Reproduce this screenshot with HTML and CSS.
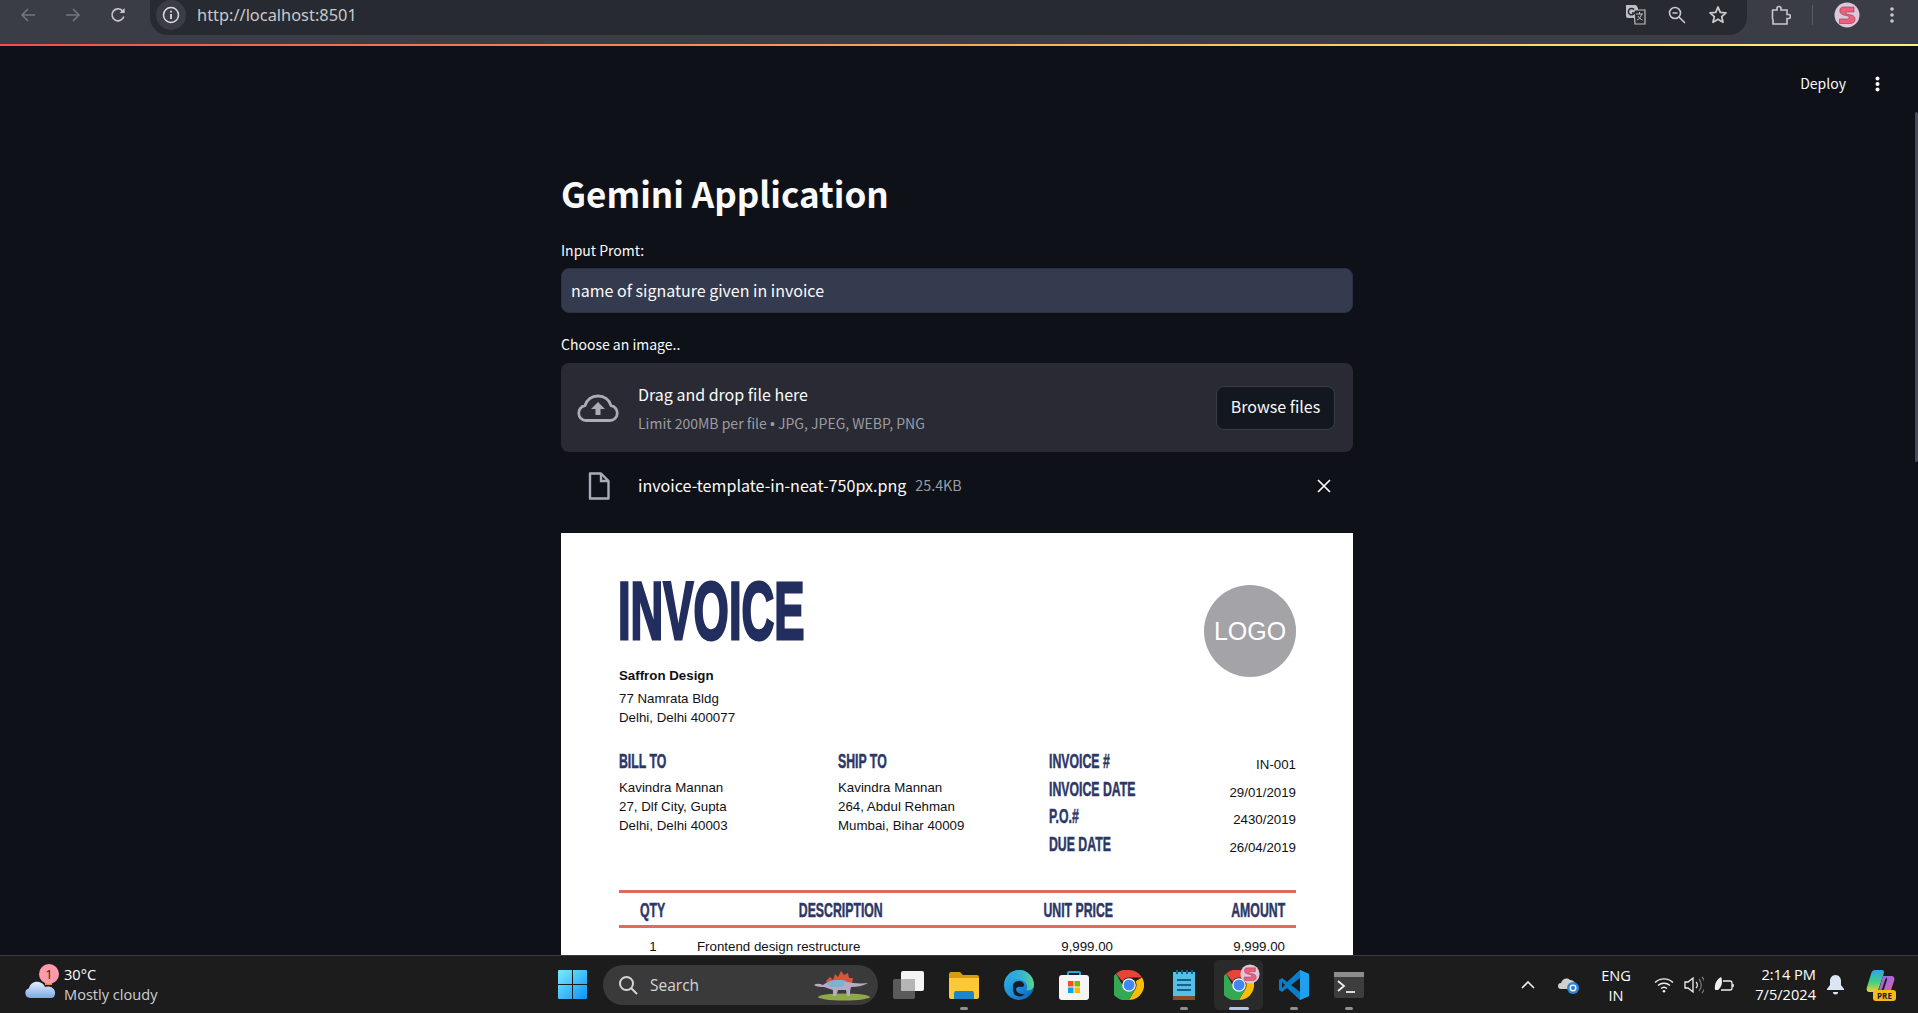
FILE: index.html

```html
<!DOCTYPE html>
<html>
<head>
  <meta charset="UTF-8">
  <title>Gemini Application</title>
  <link rel="stylesheet" href="styles.css">
</head>
<body>
  <svg class="defs" width="0" height="0">
    <symbol id="chrome" viewBox="0 0 30 30">
      <path d="M15 0a15 15 0 0 1 13 7.500H15a7.500 7.500 0 0 0-6.500 3.750L2 3.800A15 15 0 0 1 15 0z" fill="#ea4335"/>
      <path d="M28 7.500A15 15 0 0 1 15 30l6.500-11.250A7.500 7.500 0 0 0 21.500 11.250z" fill="#fbbc04"/>
      <path d="M15 30A15 15 0 0 1 2 3.800l6.500 11.200a7.500 7.500 0 0 0 13 3.750L15 30z" fill="#34a853"/>
      <circle cx="15" cy="15" r="6.800" fill="#fff"/>
      <circle cx="15" cy="15" r="5.500" fill="#4285f4"/>
    </symbol>
    <symbol id="avatar" viewBox="0 0 26 26">
      <circle cx="13" cy="13" r="12.500" fill="#dcc8dc"/>
      <path d="M20 5H9.500C6 5 5.500 8 6 10c.5 2 3 3 6 3.500 2.500.5 3 1 3 2 0 1.200-1 1.500-2 1.500H5.500v4.500H16c4 0 5.500-2.500 5-5-.4-2.500-2.500-3.500-6-4-2.500-.4-3-.8-3-1.500 0-.8.8-1 1.500-1H20z" fill="#ef5f78" stroke="#8c3a50" stroke-width=".6"/>
    </symbol>
  </svg>

  <header class="browser">
    <div class="nav">
      <svg class="nav-icon" width="16" height="16" viewBox="0 0 16 16"><path d="M15 8H2M8 2 2 8l6 6" fill="none" stroke="#73767c" stroke-width="1.600"/></svg>
      <svg class="nav-icon" width="16" height="16" viewBox="0 0 16 16"><path d="M1 8h13M8 2l6 6-6 6" fill="none" stroke="#73767c" stroke-width="1.600"/></svg>
      <svg class="nav-icon" width="16" height="16" viewBox="0 0 16 16"><path d="M13.800 9.500A6 6 0 1 1 12.300 3.600L14 5.200" fill="none" stroke="#c7c9cc" stroke-width="1.600"/><path d="M14.600 1v5h-5z" fill="#c7c9cc"/></svg>
    </div>
    <div class="omnibox">
      <span class="site-info">
        <svg width="18" height="18" viewBox="0 0 18 18"><circle cx="9" cy="9" r="7.500" fill="none" stroke="#dcdde0" stroke-width="1.500"/><path d="M8.100 8h1.800v5H8.100zM8.100 4.800h1.800v1.800H8.100z" fill="#dcdde0"/></svg>
      </span>
      <span class="url">http://localhost:8501</span>
      <span class="omni-icons">
        <svg width="21" height="21" viewBox="0 0 21 21"><path d="M1 1h10l2 3v10H3a2 2 0 0 1-2-2z" fill="#bdbfc2"/><path d="M9 6h11v14H10z" fill="#2a2c33" stroke="#bdbfc2" stroke-width="1.200"/><path d="M11 10h7M14.500 8v2M12 16c2.500-1.200 4-3 4.500-6M13 12c1 2 2.500 3 4.500 4" fill="none" stroke="#bdbfc2"/><path d="M9 5.500A3.200 3.200 0 1 0 9.500 9H7" fill="none" stroke="#2a2c33" stroke-width="1.500"/></svg>
        <svg width="18" height="18" viewBox="0 0 18 18"><circle cx="7" cy="7" r="5.500" fill="none" stroke="#c7c9cc" stroke-width="1.600"/><path d="M4.500 7h5M11 11l6 6" fill="none" stroke="#c7c9cc" stroke-width="1.600"/></svg>
        <svg width="20" height="20" viewBox="0 0 20 20"><path d="M10 2l2.300 5.300 5.700.5-4.300 3.800 1.300 5.600L10 14.200l-5 3 1.300-5.600L2 7.800l5.700-.5z" fill="none" stroke="#c7c9cc" stroke-width="1.800" stroke-linejoin="round"/></svg>
      </span>
    </div>
    <div class="browser-actions">
      <svg width="20" height="20" viewBox="0 0 20 20"><path d="M1 5h5V3.500a2 2 0 0 1 4 0V5h6v4.500h1.500a2 2 0 0 1 0 4H16V19H2v-5" fill="none" stroke="#c7c9cc" stroke-width="1.600"/><path d="M1.500 5v9" stroke="#c7c9cc" stroke-width="1.600"/></svg>
      <span class="action-sep"></span>
      <svg width="26" height="26"><use href="#avatar"/></svg>
      <svg class="kebab" width="4" height="16" viewBox="0 0 4 16"><circle cx="2" cy="2" r="1.800" fill="#c7c9cc"/><circle cx="2" cy="8" r="1.800" fill="#c7c9cc"/><circle cx="2" cy="14" r="1.800" fill="#c7c9cc"/></svg>
    </div>
  </header>
  <div class="rainbow"></div>

  <main class="app">
    <div class="app-toolbar">
      <span class="deploy">Deploy</span>
      <svg width="5" height="16" viewBox="0 0 5 16"><circle cx="2.500" cy="2.500" r="2" fill="#fafafa"/><circle cx="2.500" cy="8" r="2" fill="#fafafa"/><circle cx="2.500" cy="13.500" r="2" fill="#fafafa"/></svg>
    </div>

    <section class="block">
      <h1>Gemini Application</h1>

      <label class="field-label">Input Promt:</label>
      <div class="text-input">name of signature given in invoice</div>

      <label class="field-label second">Choose an image..</label>
      <div class="dropzone">
        <svg class="cloud" width="42" height="28" viewBox="0 0 42 28"><path d="M9 26.500a7.500 7.500 0 0 1-1-14.900C9.500 6 14.500 2 21 2c6.500 0 11.500 4 13 9.600a7.500 7.500 0 0 1-1 14.900z" fill="none" stroke="#a9adb8" stroke-width="2.800" stroke-linejoin="round"/><path d="M21 8l7 7h-4.500v6h-5v-6H14z" fill="#a9adb8"/></svg>
        <div class="drop-text">
          <div class="drop-title">Drag and drop file here</div>
          <div class="drop-limit">Limit 200MB per file <span class="dot">•</span> JPG, JPEG, WEBP, PNG</div>
        </div>
        <button class="browse">Browse files</button>
      </div>

      <div class="file-row">
        <svg class="file-icon" width="22" height="28" viewBox="0 0 22 28"><path d="M2 1.500h11l7.500 7.500v17.500H2z" fill="none" stroke="#a9adb8" stroke-width="2.400" stroke-linejoin="round"/><path d="M13 1.500V9h7.500" fill="none" stroke="#a9adb8" stroke-width="2.400"/></svg>
        <span class="file-name">invoice-template-in-neat-750px.png</span>
        <span class="file-size">25.4KB</span>
        <svg class="file-remove" width="14" height="14" viewBox="0 0 14 14"><path d="M1 1l12 12M13 1 1 13" stroke="#fafafa" stroke-width="1.700"/></svg>
      </div>

      <div class="invoice">
        <div class="inv-top">
          <div>
            <div class="inv-title"><span>INVOICE</span></div>
            <div class="inv-company">Saffron Design</div>
            <div class="inv-text">77 Namrata Bldg<br>Delhi, Delhi 400077</div>
          </div>
          <div class="inv-logo">LOGO</div>
        </div>

        <div class="inv-parties">
          <div>
            <div class="inv-head"><span>BILL TO</span></div>
            <div class="inv-text">Kavindra Mannan<br>27, Dlf City, Gupta<br>Delhi, Delhi 40003</div>
          </div>
          <div>
            <div class="inv-head"><span>SHIP TO</span></div>
            <div class="inv-text">Kavindra Mannan<br>264, Abdul Rehman<br>Mumbai, Bihar 40009</div>
          </div>
          <div class="inv-meta">
            <div class="meta-row"><div class="inv-head"><span>INVOICE #</span></div><b>IN-001</b></div>
            <div class="meta-row"><div class="inv-head"><span>INVOICE DATE</span></div><b>29/01/2019</b></div>
            <div class="meta-row"><div class="inv-head"><span>P.O.#</span></div><b>2430/2019</b></div>
            <div class="meta-row"><div class="inv-head"><span>DUE DATE</span></div><b>26/04/2019</b></div>
          </div>
        </div>

        <div class="inv-table-head">
          <div class="inv-head center"><span>QTY</span></div>
          <div class="inv-head center"><span>DESCRIPTION</span></div>
          <div class="inv-head right"><span>UNIT PRICE</span></div>
          <div class="inv-head right"><span>AMOUNT</span></div>
        </div>
        <div class="inv-row">
          <div class="center">1</div>
          <div class="desc">Frontend design restructure</div>
          <div class="right">9,999.00</div>
          <div class="right">9,999.00</div>
        </div>
      </div>
    </section>
    <div class="scroll-thumb"></div>
  </main>

  <footer class="taskbar">
    <div class="weather">
      <span class="weather-icon">
        <svg width="32" height="24" viewBox="0 0 32 24"><defs><linearGradient id="cl" x1="0" y1="0" x2="0" y2="1"><stop offset="0" stop-color="#e3effd"/><stop offset="1" stop-color="#7fa8e6"/></linearGradient></defs><rect x="20" y="2" width="7" height="8" fill="#f08a1d"/><path d="M5 23a5 5 0 0 1-1-9.800C5 9 9 6 14 7c3 .5 5 2.500 6 5 2-1 9-1 10 5 .5 3-1 6-4 6z" fill="url(#cl)"/></svg>
        <span class="weather-badge">1</span>
      </span>
      <div class="weather-text">
        <div>30°C</div>
        <div class="weather-desc">Mostly cloudy</div>
      </div>
    </div>

    <div class="task-center">
      <svg class="task-start" width="29" height="29" viewBox="0 0 29 29"><defs><linearGradient id="win" x1="0" y1="0" x2="1" y2="1"><stop offset="0" stop-color="#7deaff"/><stop offset="1" stop-color="#0a94f5"/></linearGradient></defs><path d="M0 1a1 1 0 0 1 1-1h13v14H0zM15 0h13a1 1 0 0 1 1 1v13H15zM0 15h14v14H1a1 1 0 0 1-1-1zM15 15h14v13a1 1 0 0 1-1 1H15z" fill="url(#win)"/></svg>

      <div class="task-search">
        <svg width="20" height="20" viewBox="0 0 20 20"><circle cx="8.500" cy="8.500" r="6.500" fill="none" stroke="#d5d5d5" stroke-width="2"/><path d="M13 13l6 6" stroke="#d5d5d5" stroke-width="2"/></svg>
        <span>Search</span>
        <svg class="dino" width="56" height="32" viewBox="0 0 56 32"><ellipse cx="30" cy="28" rx="26" ry="3.500" fill="#8fa848"/><path d="M12 12l4-4 3 3 2-6 3 3 3-6 3 4 4-2 1 5 4 0-1 5H14z" fill="#d9553a"/><path d="M0 16c3-2 6-1 9 0 5-4 16-7 24-3 5 1 13 2 21 1-5 3-12 4-17 4-1 3-1 6-1 9h-3l-1-6-8 0-2 6h-3l0-6c-3-1-6-2-9-3-3 0-7 0-10-2z" fill="#b9a9c4"/><path d="M12 14c6-3 14-4 20-2l-3 6-12 0z" fill="#7fb2d0"/></svg>
      </div>

      <div class="task-icons">
        <div class="task-item">
          <svg width="31" height="28" viewBox="0 0 31 28"><rect x="0" y="8" width="22" height="20" rx="2" fill="#5b5b5b"/><rect x="8" y="0" width="23" height="20" rx="2" fill="#f4f4f4"/><rect x="8" y="8" width="14" height="12" fill="#b5b5b5"/></svg>
        </div>
        <div class="task-item open">
          <svg width="30" height="28" viewBox="0 0 30 28"><path d="M0 3a2 2 0 0 1 2-2h9l3 3h14a2 2 0 0 1 2 2v4H0z" fill="#d99a14"/><path d="M0 7h30v19a2 2 0 0 1-2 2H2a2 2 0 0 1-2-2z" fill="#fdc934"/><path d="M5 22a2 2 0 0 1 2-2h16a2 2 0 0 1 2 2v6H5z" fill="#1a86d0"/></svg>
        </div>
        <div class="task-item">
          <svg width="30" height="30" viewBox="0 0 30 30"><defs><linearGradient id="edge" x1="0" y1="0" x2="1" y2="1"><stop offset="0" stop-color="#33bfe0"/><stop offset=".6" stop-color="#1a86d8"/><stop offset="1" stop-color="#0d5aa8"/></linearGradient><linearGradient id="edge2" x1="0" y1="0" x2="1" y2="0"><stop offset="0" stop-color="#2a9fe0"/><stop offset=".6" stop-color="#36b8d0"/><stop offset="1" stop-color="#5ad688"/></linearGradient></defs><circle cx="15" cy="15" r="15" fill="url(#edge)"/><path d="M15 0a15 15 0 0 1 15 15c0 4-4 6-8 5 2-2 2-8-5-10C10 8 5 11 3 15 3 8 8 0 15 0z" fill="url(#edge2)"/><path d="M9 16c0-3 3-5 6-5s5 2 5 4c0 1-1 2-2 2-2 0-5-1-6 2 0 3 4 6 9 5-3 3-7 3-10 1-2-2-2-6-2-9z" fill="#151c24"/></svg>
        </div>
        <div class="task-item">
          <svg width="30" height="30" viewBox="0 0 30 30"><path d="M9 6V3a1 1 0 0 1 1-1h10a1 1 0 0 1 1 1v3" fill="none" stroke="#2aa3dc" stroke-width="2"/><rect x="0" y="5" width="30" height="25" rx="3" fill="#f5f5f5"/><rect x="9" y="11" width="5.500" height="5.500" fill="#f25022"/><rect x="15.500" y="11" width="5.500" height="5.500" fill="#7fba00"/><rect x="9" y="17.500" width="5.500" height="5.500" fill="#00a4ef"/><rect x="15.500" y="17.500" width="5.500" height="5.500" fill="#ffb900"/></svg>
        </div>
        <div class="task-item">
          <svg width="30" height="30"><use href="#chrome"/></svg>
        </div>
        <div class="task-item open">
          <svg width="22" height="30" viewBox="0 0 22 30"><rect x="0" y="2" width="22" height="24" fill="#56bfe6"/><rect x="0" y="26" width="22" height="4" fill="#8a4b24"/><path d="M3 0h2v4H3zM8 0h2v4H8zM13 0h2v4h-2zM18 0h2v4h-2z" fill="#14618c"/><path d="M4 10h14M4 15h14M4 20h14" stroke="#14618c" stroke-width="2"/></svg>
        </div>
        <div class="task-item active">
          <svg width="30" height="30"><use href="#chrome"/></svg>
          <svg class="task-avatar" width="20" height="20"><use href="#avatar"/></svg>
        </div>
        <div class="task-item open">
          <svg width="30" height="30" viewBox="0 0 30 30"><path d="M21 0 30 4v22l-9 4L8 18l-5 4-3-2v-10l3-2 5 4z" fill="#0a7ccc"/><path d="M21 0 30 4v22l-9 4zM21 8 12 15l9 7z" fill="#1fa0ee"/><path d="M21 8v14l-9-7zM3 12v6l3-3z" fill="#1c1c1c"/></svg>
        </div>
        <div class="task-item open">
          <svg width="30" height="26" viewBox="0 0 30 26"><rect width="30" height="26" rx="2" fill="#3d3d3d"/><rect width="30" height="5" fill="#8c8c8c"/><path d="M4 9l6 5-6 5" fill="none" stroke="#eee" stroke-width="1.800"/><path d="M12 20h9" stroke="#eee" stroke-width="1.800"/></svg>
        </div>
      </div>
    </div>

    <div class="tray">
      <svg class="tray-up" width="14" height="8" viewBox="0 0 14 8"><path d="M1 7l6-6 6 6" fill="none" stroke="#f0f0f0" stroke-width="1.600"/></svg>
      <svg class="tray-cloud" width="21" height="18" viewBox="0 0 21 18"><path d="M3 13a3 3 0 0 1 0-6c1-4 6-6 9-3 2 0 5 1 5 4v5z" fill="#cfcfcf"/><circle cx="15" cy="12" r="6" fill="#2f86d8"/><circle cx="15" cy="12" r="2.800" fill="none" stroke="#fff" stroke-width="1.300"/></svg>
      <div class="tray-lang">ENG<br>IN</div>
      <svg class="tray-wifi" width="20" height="16" viewBox="0 0 20 16"><path d="M1 5.500a13 13 0 0 1 18 0M4 8.500a9 9 0 0 1 12 0M7 11.500a4.500 4.500 0 0 1 6 0" fill="none" stroke="#f0f0f0" stroke-width="1.400"/><circle cx="10" cy="14.300" r="1.300" fill="#f0f0f0"/></svg>
      <svg class="tray-vol" width="20" height="18" viewBox="0 0 20 18"><path d="M1 6h3l5-4v14l-5-4H1z" fill="none" stroke="#f0f0f0" stroke-width="1.300"/><path d="M12 6a4 4 0 0 1 0 6" fill="none" stroke="#f0f0f0" stroke-width="1.200"/><path d="M15 3a9 9 0 0 1 0 12M18 1a12 12 0 0 1 0 16" fill="none" stroke="#7c7c7c" stroke-width="1.200"/></svg>
      <svg class="tray-batt" width="20" height="18" viewBox="0 0 20 18"><path d="M9 5h7a2 2 0 0 1 2 2v5a2 2 0 0 1-2 2H7" fill="none" stroke="#f0f0f0" stroke-width="1.300"/><path d="M19 8v3" stroke="#f0f0f0" stroke-width="1.500"/><path d="M1 14C0 8 3 3 7 1c2 4 1 10-3 13z" fill="#f0f0f0"/></svg>
      <div class="tray-clock">2:14 PM<br>7/5/2024</div>
      <svg class="tray-bell" width="17" height="20" viewBox="0 0 17 20"><path d="M8.500 0C5 0 3 3 3 6v4l-3 4v1h17v-1l-3-4V6c0-3-2-6-5.500-6zM6 17h5a2.500 2.500 0 0 1-5 0z" fill="#dbe6f5"/></svg>
      <span class="copilot">
        <svg width="29" height="24" viewBox="0 0 29 24"><defs><linearGradient id="co1" x1="0" y1="0" x2="0" y2="1"><stop offset="0" stop-color="#2aa5f0"/><stop offset=".55" stop-color="#40d080"/><stop offset="1" stop-color="#f5d030"/></linearGradient><linearGradient id="co2" x1="0" y1="0" x2="1" y2="1"><stop offset="0" stop-color="#7d6cf5"/><stop offset="1" stop-color="#f05fa8"/></linearGradient></defs><path d="M18 6h7c3 0 4 2 3 5l-3 9c-1 2-3 4-6 4h-7c3 0 5-2 6-5l3-9c0-2 0-4-3-4z" fill="url(#co2)"/><path d="M9 0h7c3 0 2 3 1 6l-4 12c-1 3-3 4-6 4H4c-3 0-4-2-3-5L5 4c1-3 2-4 4-4z" fill="url(#co1)"/><path d="M17 6h8c-3 0-5 1-6 4l-3 9c-1 2-2 4-4 4l5-17z" fill="url(#co2)"/></svg>
        <span class="pre-tag">PRE</span>
      </span>
    </div>
  </footer>
</body>
</html>
```

FILE: styles.css

```css
* {
  box-sizing: border-box;
}
html, body {
  height: 100%;
}
body {
  margin: 0;
  display: flex;
  flex-direction: column;
  overflow: hidden;
  background-color: #0e1117;
  font-family: "Noto Sans CJK SC", "Noto Sans", sans-serif;
  color: #fafafa;
}
.defs {
  position: absolute;
}

/* browser chrome */
.browser {
  height: 44px;
  flex: none;
  display: flex;
  align-items: flex-start;
  background-color: #3a3d45;
}
.nav {
  width: 150px;
  height: 29px;
  display: flex;
  align-items: center;
  padding-left: 20px;
  gap: 29px;
}
.omnibox {
  width: 1597px;
  height: 35px;
  display: flex;
  align-items: center;
  padding: 0 0 6px 6px;
  background-color: #282a31;
  border-radius: 0 0 18px 18px;
}
.site-info {
  width: 30px;
  height: 30px;
  display: flex;
  align-items: center;
  justify-content: center;
  background-color: #3a3d45;
  border-radius: 50%;
}
.url {
  margin-left: 11px;
  font-family: "Noto Sans", sans-serif;
  font-size: 16.400px;
  color: #c7c9cc;
}
.omni-icons {
  margin-left: auto;
  margin-right: 19px;
  display: flex;
  align-items: center;
  gap: 22px;
}
.browser-actions {
  flex: 1;
  height: 29px;
  display: flex;
  align-items: center;
  padding-left: 24px;
}
.action-sep {
  width: 1px;
  height: 20px;
  margin: 0 21px;
  background-color: #5a5d65;
}
.kebab {
  margin-left: 30px;
}
.rainbow {
  height: 2px;
  flex: none;
  background: linear-gradient(90deg, #f64c4c, #ff8a4c 35%, #ffc75c 65%, #fff27a);
}

/* streamlit page */
.app {
  flex: 1;
  position: relative;
  overflow: hidden;
}
.app-toolbar {
  height: 119px;
  display: flex;
  align-items: flex-start;
  justify-content: flex-end;
  gap: 29px;
  padding: 27px 38px 0 0;
}
.deploy {
  font-size: 14px;
  line-height: 20px;
}
.app-toolbar svg {
  margin-top: 3px;
}
.block {
  width: 792px;
  margin-left: 561px;
}
h1 {
  margin: 0 0 19px;
  font-size: 35px;
  line-height: 56px;
  font-weight: 600;
}
.field-label {
  display: block;
  font-size: 14px;
  line-height: 20px;
  margin-bottom: 8px;
}
.field-label.second {
  margin-top: 21px;
  margin-bottom: 9px;
}
.text-input {
  height: 45px;
  padding: 0 9px;
  font-size: 16px;
  line-height: 43px;
  background-color: #343b4e;
  border: 1px solid #2c3244;
  border-radius: 8px;
}
.dropzone {
  height: 89px;
  display: flex;
  align-items: center;
  padding: 0 18px 0 16px;
  background-color: #292a33;
  border-radius: 8px;
}
.drop-text {
  margin-left: 19px;
}
.drop-title {
  font-size: 16px;
  line-height: 24px;
}
.drop-limit {
  margin-top: 7px;
  font-size: 14px;
  line-height: 20px;
  color: #9a9ca4;
}
.dot {
  font-family: "Liberation Sans", sans-serif;
}
.browse {
  margin-left: auto;
  width: 119px;
  height: 44px;
  padding: 0 0 3px;
  font: inherit;
  font-size: 16px;
  color: #fafafa;
  background-color: #13171f;
  border: 1px solid #3a3d47;
  border-radius: 8px;
}
.file-row {
  height: 81px;
  display: flex;
  align-items: center;
  padding: 0 22px 14px 27px;
}
.file-name {
  margin: -2px 0 0 28px;
  font-size: 16.100px;
  line-height: 24px;
}
.file-size {
  margin: -2px 0 0 9px;
  font-size: 14.300px;
  line-height: 24px;
  color: #9a9ca4;
}
.file-remove {
  margin: 1px 0 0 auto;
}

/* the uploaded invoice */
.invoice {
  height: 560px;
  padding: 35px 57px 0 58px;
  background-color: #fff;
  font-family: "Liberation Sans", sans-serif;
  font-size: 13.300px;
  line-height: 19px;
  color: #111114;
}
.inv-top {
  display: flex;
  justify-content: space-between;
}
.inv-title {
  height: 86px;
  margin-left: -1px;
  font-family: "Liberation Sans Narrow", "Liberation Sans", sans-serif;
  font-weight: 700;
  font-size: 81px;
  line-height: 86px;
  color: #212e5e;
  white-space: nowrap;
}
.inv-title span {
  display: inline-block;
  transform: scaleX(.56);
  transform-origin: left center;
  -webkit-text-stroke: 3px #212e5e;
}
.inv-company {
  margin-top: 12px;
  font-weight: 700;
}
.inv-company + .inv-text {
  margin-top: 4px;
}
.inv-logo {
  width: 92px;
  height: 92px;
  margin-top: 17px;
  display: flex;
  align-items: center;
  justify-content: center;
  background-color: #a3a3a8;
  border-radius: 50%;
  color: #fff;
  font-size: 25px;
}
.inv-parties {
  margin-top: 21px;
  display: grid;
  grid-template-columns: 219px 211px 1fr;
}
.inv-head {
  height: 26px;
  display: flex;
  line-height: 26px;
  font-family: "Liberation Sans Narrow", "Liberation Sans", sans-serif;
  font-weight: 700;
  font-size: 21px;
  color: #2c3766;
  white-space: nowrap;
}
.inv-head + .inv-text {
  margin-top: 4px;
}
.inv-head span {
  display: inline-block;
  transform: scaleX(.585);
  transform-origin: left center;
  -webkit-text-stroke: .5px #2c3766;
}
.inv-head.center {
  justify-content: center;
}
.inv-head.right {
  justify-content: flex-end;
}
.meta-row {
  height: 27.600px;
  display: flex;
  justify-content: space-between;
}
.meta-row b {
  margin-top: 7px;
  font-weight: 400;
}
.inv-table-head {
  margin-top: 32px;
  height: 38px;
  padding-top: 4px;
  display: grid;
  grid-template-columns: 68px 308px 118px 172px;
  border-top: 3px solid #df6a5e;
  border-bottom: 3px solid #df6a5e;
}
.inv-table-head .center span {
  transform-origin: center;
}
.inv-table-head .right span {
  transform-origin: right center;
}
.inv-row {
  margin-top: 9px;
  display: grid;
  grid-template-columns: 68px 308px 118px 172px;
}
.center {
  text-align: center;
}
.right {
  text-align: right;
}
.desc {
  padding-left: 10px;
}

.scroll-thumb {
  position: absolute;
  right: 0;
  top: 66px;
  width: 3px;
  height: 350px;
  background-color: #484b55;
  border-radius: 2px;
}

/* windows taskbar */
.taskbar {
  height: 58px;
  flex: none;
  display: flex;
  align-items: center;
  position: relative;
  padding-left: 25px;
  background-color: #1c1c1c;
  border-top: 1px solid #3a3a3a;
  font-family: "Open Sans", sans-serif;
  color: #fff;
}
.weather {
  width: 533px;
  display: flex;
  align-items: center;
}
.weather-icon {
  position: relative;
  width: 32px;
  height: 24px;
  margin-top: 4px;
}
.weather-badge {
  position: absolute;
  top: -11px;
  left: 14px;
  width: 20px;
  height: 20px;
  border-radius: 50%;
  background-color: #ff9aa8;
  color: #222;
  font-size: 13px;
  line-height: 20px;
  text-align: center;
}
.weather-text {
  margin: -2px 0 0 7px;
  font-size: 14.600px;
  line-height: 20px;
}
.weather-desc {
  color: #cfcfcf;
}
.task-center {
  display: flex;
  align-items: center;
}
.task-search {
  width: 275px;
  height: 40px;
  margin-left: 16px;
  display: flex;
  align-items: center;
  padding: 0 8px 0 15px;
  gap: 12px;
  background-color: #3a3a3a;
  border-radius: 20px;
  font-size: 15.500px;
  color: #d5d5d5;
}
.dino {
  margin-left: auto;
}
.task-icons {
  display: flex;
  margin-left: 3px;
}
.task-item {
  position: relative;
  width: 55px;
  height: 50px;
  display: flex;
  align-items: center;
  justify-content: center;
}
.task-item.open::after,
.task-item.active::after {
  content: "";
  position: absolute;
  bottom: 0;
  left: 50%;
  width: 8px;
  height: 3px;
  margin-left: -4px;
  background-color: #8f8f8f;
  border-radius: 2px;
}
.task-item.active {
  width: 49px;
  margin: 0 3px;
  background-color: #2a2a2a;
  border-radius: 5px;
}
.task-item.active::after {
  width: 20px;
  margin-left: -10px;
  background-color: #b4c6e6;
}
.task-avatar {
  position: absolute;
  top: 4px;
  right: 3px;
}
.tray {
  position: absolute;
  right: 22px;
  top: 0;
  height: 100%;
  display: flex;
  align-items: center;
}
.tray-cloud {
  margin-left: 23px;
}
.tray-lang {
  width: 40px;
  margin-left: 17px;
  text-align: center;
  font-size: 14.600px;
  line-height: 20px;
}
.tray-wifi {
  margin-left: 18px;
}
.tray-vol,
.tray-batt {
  margin-left: 10px;
}
.tray-clock {
  width: 72px;
  margin: -2px 0 0 10px;
  text-align: right;
  font-size: 14.600px;
  line-height: 20px;
}
.tray-bell {
  margin-left: 11px;
}
.copilot {
  position: relative;
  width: 30px;
  height: 30px;
  margin-left: 22px;
}
.pre-tag {
  position: absolute;
  left: 7px;
  top: 20px;
  width: 23px;
  height: 11px;
  background-color: #f6b91f;
  border-radius: 3px;
  color: #1c1c1c;
  font-size: 8px;
  font-weight: 700;
  line-height: 11px;
  text-align: center;
}
```
